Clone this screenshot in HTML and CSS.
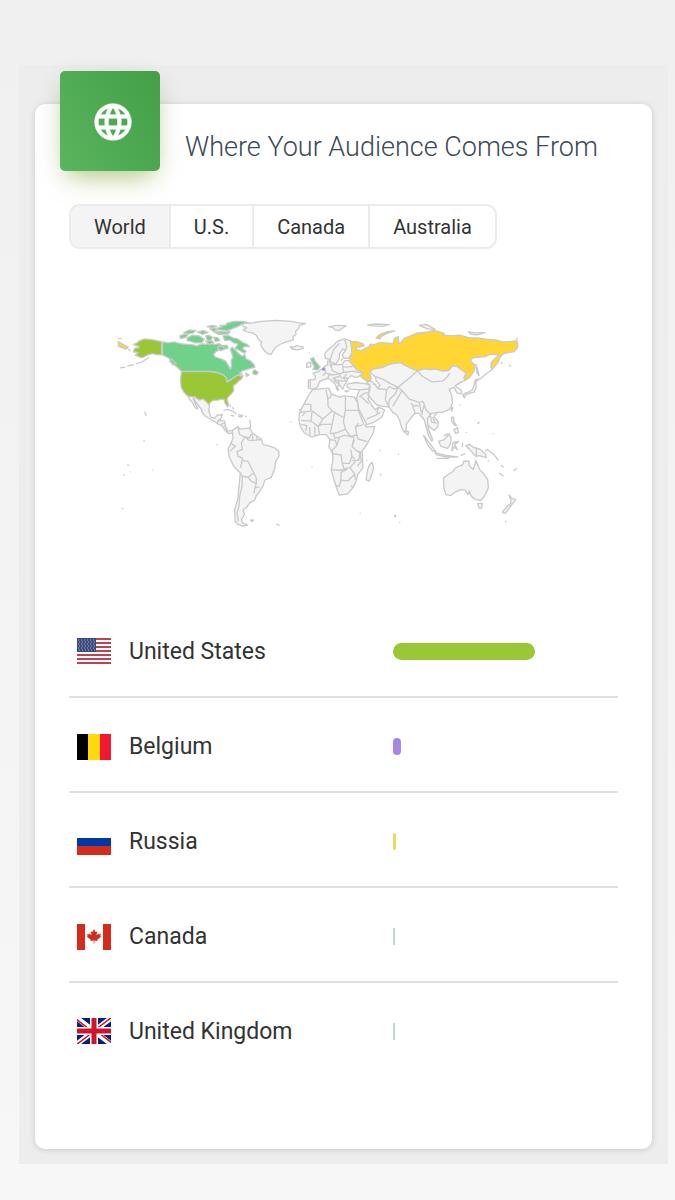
FILE: index.html
```html
<!DOCTYPE html>
<html lang="en">
<head>
<meta charset="utf-8">
<meta name="viewport" content="width=device-width, initial-scale=1">
<title>Audience</title>
<link rel="stylesheet" href="styles.css">
</head>
<body>
<main class="panel">
  <section class="card">
    <header class="card-header">
      <div class="card-icon">
        <svg class="globe" viewBox="0 0 24 24" aria-hidden="true"><path d="M11.99 2C6.47 2 2 6.48 2 12s4.47 10 9.99 10C17.52 22 22 17.52 22 12S17.52 2 11.99 2zm6.93 6h-2.95c-.32-1.25-.78-2.45-1.38-3.56 1.84.63 3.37 1.91 4.33 3.56zM12 4.04c.83 1.2 1.48 2.53 1.91 3.96h-3.82c.43-1.43 1.08-2.76 1.91-3.96zM4.26 14C4.1 13.36 4 12.69 4 12s.1-1.36.26-2h3.38c-.08.66-.14 1.32-.14 2 0 .68.06 1.34.14 2H4.26zm.82 2h2.95c.32 1.25.78 2.45 1.38 3.56-1.84-.63-3.37-1.9-4.33-3.56zm2.95-8H5.08c.96-1.66 2.49-2.93 4.33-3.56C8.81 5.55 8.35 6.75 8.03 8zM12 19.96c-.83-1.2-1.48-2.53-1.91-3.96h3.82c-.43 1.43-1.08 2.76-1.91 3.96zM14.34 14H9.66c-.09-.66-.16-1.32-.16-2 0-.68.07-1.35.16-2h4.68c.09.65.16 1.32.16 2 0 .68-.07 1.34-.16 2zm.25 5.56c.6-1.11 1.06-2.31 1.38-3.56h2.95c-.96 1.65-2.49 2.93-4.33 3.56zM16.36 14c.08-.66.14-1.32.14-2 0-.68-.06-1.34-.14-2h3.38c.16.64.26 1.31.26 2s-.1 1.36-.26 2h-3.38z"/></svg>
      </div>
      <h1 class="card-title">Where Your Audience Comes From</h1>
    </header>

    <nav class="tabs" aria-label="Region">
      <button type="button" class="tab is-active" aria-pressed="true">World</button>
      <button type="button" class="tab" aria-pressed="false">U.S.</button>
      <button type="button" class="tab" aria-pressed="false">Canada</button>
      <button type="button" class="tab" aria-pressed="false">Australia</button>
    </nav>

    <svg class="map" viewBox="0 0 1230 660" role="img" aria-label="World map of audience by country">
      <!-- North America -->
      <g class="canada">
        <path d="M158,96 175,99 192,96 215,102 245,104 262,108 275,102 290,103 300,98 315,104 328,101 338,108 352,106 355,115 335,118 318,125 311,135 318,142 334,147 347,153 354,163 362,178 366,168 364,152 370,142 366,130 362,118 368,112 378,122 390,134 398,139 405,134 410,148 421,152 433,164 436,172 420,176 408,180 398,183 390,190 398,192 388,196 370,205 352,217 350,205 340,195 322,188 215,185 207,176 197,168 186,160 178,145 168,140 158,135Z"/>
        <path d="M210,78 225,72 235,74 228,82 212,86Z M232,84 248,76 268,78 284,88 276,98 258,99 245,95 232,92Z M222,68 240,60 258,62 250,69 232,72Z M262,66 282,62 295,67 278,73Z M288,78 298,76 308,82 303,92 292,90Z M288,94 305,92 312,98 298,104Z M312,82 326,84 330,93 316,94Z"/>
        <path d="M350,40 372,34 400,34 418,39 396,43 386,49 370,55 355,62 330,60 318,56 338,50 330,47 350,45Z M300,56 315,54 325,60 310,64Z M312,66 335,65 362,66 355,72 325,73Z M292,50 308,46 322,49 306,53Z"/>
        <path d="M340,78 355,76 370,84 385,87 398,97 412,103 420,110 405,110 398,116 410,124 404,130 388,121 376,115 382,108 384,102 370,98 360,90 345,92Z M325,110 338,108 346,117 334,122 324,118Z M430,185 434,179 446,188 440,195 430,192Z M408,190 418,196 410,200Z"/>
      </g>
      <path class="usa" d="M155,95 130,90 105,87 90,92 82,98 70,104 86,109 88,113 74,115 70,126 85,128 76,136 90,142 98,143 112,136 128,131 140,134 155,135Z"/>
      <path class="usa" d="M215,185H300L322,188 340,195 350,205 352,217 370,205 385,195 392,199 400,197 396,207 388,213 379,222 371,228 372,243 365,252 354,263 352,270 357,286 353,291 346,280 344,270 335,268 325,271 310,272 301,278 299,287 290,277 280,268 268,271 255,262 235,260 222,247 214,232 212,208Z"/>
      <path class="line" d="M118,142 95,157 78,162M72,164 52,169M46,172 30,174M174,143 188,150 200,163M178,152 190,166M104,306 110,318M62,122 54,118M35,86H25"/>
      <path class="land" d="M235,260 255,262 268,271 280,268 290,277 299,287 297,300 303,322 315,326 322,316 338,315 334,326 326,334 321,340 300,327 285,318 278,309 274,297 264,285 254,270 250,266 258,285 264,298 256,294 248,278 240,270Z M321,340 326,331 345,334 347,353 354,364 372,361 370,369 358,372 346,362 338,349Z"/>
      <path class="line" d="M330,327 332,336M334,343 346,340M345,349 353,358M341,302 355,299 370,305 380,313M386,314 400,318 392,322 385,318M363,316 374,319M360,285 363,291M368,292 372,299M406,320H412M420,330 423,345 421,355"/>
      <!-- Greenland, Iceland, Svalbard and the Arctic islands -->
      <path class="land" d="M400,40 430,39 455,34 500,31 545,34 565,38 588,41 570,46 566,58 558,64 560,73 550,80 552,90 530,96 512,103 498,112 490,124 484,134 472,130 464,122 453,105 456,96 448,90 440,76 428,69 412,66 400,60 412,54 400,49Z M542,110 552,112 560,107 578,110 582,114 567,120 548,118Z"/>
      <path class="land" d="M658,50 680,46 710,47 700,54 688,62 676,60 672,54Z M775,45 800,42 840,44 820,49 790,48Z M930,46 950,43 965,51 978,58 955,57Z M1078,66 1100,69 1128,68 1105,75 1085,73Z"/>
      <!-- Russia -->
      <path class="russia" d="M722,95 740,95 760,101 765,107 750,112 740,110 742,119 758,122 766,115 778,112 782,103 795,104 810,98 830,99 852,101 855,86 866,80 870,104 884,86 900,79 922,70 950,67 975,61 1006,70 1000,76 1030,77 1055,76 1080,84 1105,84 1130,88 1165,91 1180,96 1225,93 1226,112 1216,125 1185,130 1175,140 1166,159 1150,178 1145,172 1147,157 1160,144 1170,134 1145,133 1128,140 1105,142 1090,145 1084,153 1098,166 1095,184 1080,204 1067,212 1064,204 1071,190 1055,178 1040,168 1028,170 1018,182 1000,184 980,178 960,179 942,177 925,183 900,173 882,164 872,158 852,161 838,164 820,173 800,176 785,181 780,192 786,205 782,214 765,209 754,200 760,188 742,180 730,166 719,152 728,132 722,112Z M800,84 812,73 835,65 856,63 832,71 815,80 812,87Z M25,95 55,112 48,118 25,109Z"/>
      <path class="line" d="M1100,163 1106,180 1110,198 1104,190 1100,163M1150,178 1130,193 1112,208M1180,157 1176,162M1200,166 1206,169M1220,88 1226,85"/>
      <!-- Europe -->
      <path class="land" d="M645,132 655,120 670,108 684,94 705,87 722,93 726,108 727,130 718,145 704,145 698,135 708,122 700,117 690,132 690,145 680,162 666,158 660,148 648,146Z"/>
      <path class="land" d="M638,178 648,167 655,165 654,154 660,154 664,164 682,164 698,164 706,152 719,152 730,166 742,180 760,188 754,196 744,202 736,202 726,197 716,206 710,218 705,226 700,238 692,228 686,215 672,204 678,216 690,224 682,234 676,222 664,210 655,206 640,210 630,216 624,232 610,238 596,234 597,210 616,209 618,199 610,190 625,186Z"/>
      <path class="uk" d="M603,146 613,143 616,152 624,162 632,171 625,180 610,179 615,171 610,162Z"/>
      <path class="land" d="M592,160 604,157 604,170 591,173Z M715,222 740,218 770,222 782,226 777,238 750,240 722,238 712,230Z M680,236 688,238 684,242Z M706,243H718L710,246Z"/>
      <path class="line" d="M704,208 712,203M645,170 648,190 640,198M650,190 670,195 690,192M665,165 668,182 690,192 702,188 700,166M702,172 730,170M702,188 730,184 758,190M690,192 695,204 716,206M672,204 690,200M655,206 658,196 672,194M685,212 700,214 712,212M602,210 602,232M700,145 695,153M662,150 672,120 690,100M706,90 712,110 708,122M702,204 712,192M662,164 663,170"/>
      <!-- Africa -->
      <path class="land" d="M608,240 625,238 658,235 665,252 690,262 705,258 735,262 745,280 748,305 762,340 772,352 795,350 792,370 775,400 758,425 760,450 760,475 745,495 740,515 730,535 715,553 690,557 685,545 675,515 665,480 670,455 670,432 658,410 662,390 650,375 630,375 605,382 585,370 572,350 568,330 570,308 585,280 595,260Z M788,458 793,475 780,515 770,510 775,480 780,467Z"/>
      <path class="line" d="M582,284 604,284 604,300 640,328 668,304 656,290 655,268 650,240M655,268 662,262 666,255M668,304 704,324 708,302V262M708,302H748M574,332 604,334 608,302M570,308 604,304M604,334 626,350 640,328M626,350 636,344 668,344 672,325 676,305M600,352 602,378M616,350V378M626,350 630,375M574,344 592,348 588,364M668,344 662,372 680,370 708,358 702,336 704,324M672,370 676,386 690,382 705,376 734,384M708,358 722,380 742,376 738,352 748,340M738,352 760,345M742,376 746,388 774,396M734,384 728,410 740,422 758,430M728,410 735,390M662,390 678,392 682,408 668,422 670,432M682,408 690,384M670,432 695,436 698,460 720,462 728,440 724,420M740,422 752,430 748,452 728,452M698,460 704,478 722,474 738,455M665,480 690,482 712,480 695,488 694,512 715,514 736,494 722,474M694,512 690,530 678,528M736,494 738,510M724,528 732,534M578,318 586,310M725,440 736,446M752,430 756,455 744,470"/>
      <!-- Western Asia, Arabia -->
      <path class="land" d="M742,262 750,240 777,238 782,250 776,268 786,285 798,300 808,292 826,300 818,322 795,337 773,345 762,325 748,297Z"/>
      <path class="line" d="M750,262 765,250 782,248M756,262 778,282M772,328 796,318 812,308M808,292 802,310"/>
      <!-- Central, southern and eastern Asia -->
      <path class="land" d="M782,226 770,216 785,214 796,222 805,236 812,226 800,212 798,200 785,192 785,181 800,176 820,173 838,164 852,161 872,158 882,164 900,173 925,183 942,177 960,179 980,178 1000,184 1018,182 1028,170 1040,168 1055,178 1071,190 1064,204 1067,212 1050,220 1038,228 1048,236 1058,242 1056,252 1044,250 1035,233 1020,238 1028,258 1030,280 1022,298 1000,308 985,308 975,320 988,338 985,352 975,362 965,355 955,345 960,365 970,388 968,395 958,378 952,355 945,330 935,318 928,310 915,312 905,325 892,342 890,362 885,368 878,355 870,330 862,315 850,308 840,292 820,290 802,285 788,270 776,255 782,240Z"/>
      <path class="line" d="M805,236 832,240 840,230 855,238 866,232 900,205 925,183M798,200 820,208 845,222 866,232M832,240 828,270 840,292M866,232 858,252 840,270 838,285M866,232 878,242 868,260 850,290M878,242 900,268 930,278 942,275M930,278 934,300 940,315M942,275 950,300 962,312 985,308M905,280 912,288 928,288M925,183 940,200 968,216 1000,214 1015,200 1022,190M962,312 968,338 985,340M945,285 938,310M910,290 918,310M965,315 955,325 955,345M790,222 800,225M1056,214 1045,226M970,322 978,338"/>
      <!-- Japan, Taiwan, Philippines and Indonesia -->
      <path class="land" d="M1060,256 1068,250 1080,246 1090,240 1095,225 1098,210 1112,207 1100,216 1101,232 1096,246 1084,250 1070,255 1066,264Z M1027,292 1031,294 1027,305Z M1027,322 1034,322 1034,335 1042,348 1036,346 1028,334Z M1034,360 1045,354 1048,368 1040,372Z M943,377 960,399 980,425 970,424 955,405Z M978,429 1010,437 1046,442 1010,442 980,435Z M988,395 1005,390 1018,374 1026,382 1024,402 1015,416 995,410Z M1031,398 1048,396 1036,404 1045,420 1035,412 1028,424Z M1070,408 1082,404 1095,414 1112,418 1128,432 1132,444 1110,438 1100,440 1084,422Z M890,364 898,366 896,376 890,372Z M1013,382 1022,370"/>
      <path class="line" d="M1102,414V438M1055,438 1068,432M1060,400V412M1128,424 1138,418M1136,422 1154,434 1168,452M1176,466 1184,474M1170,490 1184,500M1214,484 1224,475M982,446H1020M1004,378 1018,372"/>
      <!-- Australia and New Zealand -->
      <path class="land" d="M1003,505 1018,494 1032,485 1038,476 1048,470 1060,466 1064,455 1080,455 1080,468 1092,479 1098,464 1100,452 1106,466 1112,480 1122,490 1136,510 1138,535 1126,560 1115,573 1100,570 1088,562 1080,545 1077,555 1068,542 1055,540 1038,548 1025,558 1010,555 1004,535Z M1106,582H1120L1117,596H1110Z M1200,556 1208,566 1220,570 1210,584 1204,582 1206,572Z M1200,585 1207,588 1188,612 1180,608 1186,600Z"/>
      <!-- South America -->
      <path class="land" d="M368,362 385,350 390,358 400,357 420,355 428,370 440,378 455,388 460,405 475,408 495,415 508,425 508,440 498,455 495,480 485,503 465,512 460,530 447,550 440,558 435,572 420,580 412,592 400,602 405,615 395,630 400,642 414,646 400,650 385,645 376,635 375,600 384,570 388,530 392,490 372,470 358,440 355,418 362,405 370,385Z M422,632 432,631 428,636Z"/>
      <path class="line" d="M385,355 390,375 405,382 395,400 398,420 382,425 385,440 398,445 398,452 415,455 425,475 432,490 440,505 440,522 425,515 415,503 398,500 392,490M405,382 420,385 425,372M428,374 430,392 455,390M441,380 443,394M398,452 392,475M398,500 397,530 390,560 388,590 382,610 386,636M415,503 432,490M450,532 436,535 433,552M362,400 378,410 360,425M405,382 418,392 430,392M440,522 436,535M500,644 510,648"/>
      <!-- Ocean islands -->
      <path class="speck" d="M100,394h5M52,465l5,3M40,496h5M60,487h3M127,481h3M36,597h4M320,405h4M542,337h4M606,473h3M810,423h4M866,434h3M812,498l4,-6M854,620l6,3M870,639h3M751,611h3M1106,343l4,-6M1070,368h4M1150,372h3M1108,338h4M1050,286h4M568,300h8M771,452h3M856,618h5M1188,636h4M1136,454h4M598,128h3M622,138h3"/>
      <circle class="belgium" cx="642" cy="178" r="4"/>
    </svg>

    <table class="countries" aria-label="Audience by country">
      <tbody>
        <tr>
          <td class="flag-cell"><svg class="flag" viewBox="0 0 34 26" role="img" aria-label="Flag of the United States"><path fill="#fff" d="M0 0h34v26H0z"/><path stroke="#b22234" stroke-opacity=".85" stroke-width="2" d="M0 1h34M0 5h34M0 9h34M0 13h34M0 17h34M0 21h34M0 25h34"/><path fill="#3c4b7e" d="M0 0h19v14H0z"/><path stroke="#9fa8cc" stroke-width="1" stroke-dasharray="1 2" d="M1 2h18M2 4h17M1 6h18M2 8h17M1 10h18M2 12h17"/></svg></td>
          <th class="name" scope="row">United States</th>
          <td><div class="bar bar-usa" style="width:65.5%"></div></td>
        </tr>
        <tr>
          <td class="flag-cell"><svg class="flag" viewBox="0 0 34 26" role="img" aria-label="Flag of Belgium"><path d="M0 0h12v26H0z"/><path fill="#ffd90c" d="M11 0h12v26H11z"/><path fill="#f31830" d="M23 0h11v26H23z"/></svg></td>
          <th class="name" scope="row">Belgium</th>
          <td><div class="bar bar-belgium" style="width:3.6%"></div></td>
        </tr>
        <tr>
          <td class="flag-cell"><svg class="flag" viewBox="0 0 34 26" role="img" aria-label="Flag of Russia"><path fill="#fff" d="M0 0h34v9H0z"/><path fill="#0039a6" d="M0 9h34v9H0z"/><path fill="#d52b1e" d="M0 17h34v9H0z"/></svg></td>
          <th class="name" scope="row">Russia</th>
          <td><div class="bar bar-russia" style="width:1.5%"></div></td>
        </tr>
        <tr>
          <td class="flag-cell"><svg class="flag" viewBox="0 0 34 26" role="img" aria-label="Flag of Canada"><path fill="#fff" d="M0 0h34v26H0z"/><path fill="#d52b1e" d="M0 0h8v26H0zM26 0h8v26h-8zM17 5l1.5 3 1.7-.8-.7 4 2-1.8.4 1 2.100-.3-.7 2 .8.7-3.900 2.900.4 1.300-3.300-.5.1 3h-.8l.1-3-3.300.5.4-1.300-3.900-2.900.8-.7-.7-2 2.100.3.4-1 2 1.800-.7-4 1.700.8z"/></svg></td>
          <th class="name" scope="row">Canada</th>
          <td><div class="bar bar-small" style="width:1%"></div></td>
        </tr>
        <tr>
          <td class="flag-cell"><svg class="flag" viewBox="0 0 34 26" role="img" aria-label="Flag of the United Kingdom"><path fill="#00247d" d="M0 0h34v26H0z"/><path stroke="#fff" stroke-width="5" d="M0 0l34 26M34 0L0 26"/><path stroke="#cf142b" stroke-width="1.500" d="M-1 1l17 13M35-1L18 12M18 12l17 13M16 14L-1 27"/><path stroke="#fff" stroke-width="8" d="M17 0v26M0 13h34"/><path stroke="#cf142b" stroke-width="5" d="M17 0v26M0 13h34"/></svg></td>
          <th class="name" scope="row">United Kingdom</th>
          <td><div class="bar bar-small" style="width:1%"></div></td>
        </tr>
      </tbody>
    </table>
  </section>
</main>
</body>
</html>
```

FILE: styles.css
```css
* {
  box-sizing: border-box;
}

body {
  margin: 0;
  min-height: 100vh;
  display: flow-root;
  background: linear-gradient(#f0f0f0, #f7f7f7);
  color: #333;
  font-family: Roboto, "Liberation Sans", sans-serif;
}

.panel {
  margin: 65px 7px 35px 19px;
  padding: 39px 16px 15px;
  background: #ededed;
}

.card {
  padding: 0 34px 72px;
  background: #fff;
  border-radius: 10px;
  box-shadow: 0 1px 6px rgba(0, 0, 0, 0.15);
}

.card-header {
  display: flex;
  align-items: flex-start;
  gap: 25px;
  margin-left: -9px;
}

.card-icon {
  flex: none;
  display: flex;
  align-items: center;
  justify-content: center;
  width: 100px;
  height: 100px;
  margin-top: -33px;
  padding: 2px 0 0 5px;
  background: linear-gradient(60deg, #5ab55e, #43a047);
  border-radius: 5px;
  box-shadow: 0 6px 28px -6px rgba(0, 0, 0, 0.16), 0 14px 22px -8px rgba(160, 200, 60, 0.5);
}

.globe {
  width: 44px;
  height: 44px;
  fill: #fff;
  stroke: #fff;
  stroke-width: 0.3;
}

.card-title {
  margin: 26px 0 0;
  font-size: 27px;
  font-weight: 300;
  line-height: 34px;
  color: #3c4858;
}

.tabs {
  display: inline-flex;
  margin-top: 33px;
  border: 2px solid #ebebeb;
  border-radius: 11px;
  overflow: hidden;
}

.tab {
  padding: 1px 23px 0;
  border: 0;
  background: #fff;
  color: #333;
  font: inherit;
  font-size: 20px;
  line-height: 40px;
}

.tab + .tab {
  border-left: 2px solid #ebebeb;
}

.tab.is-active {
  background: #f4f4f4;
}

.map {
  display: block;
  width: 74.5%;
  margin: 61px 0 73px 41px;
  stroke: #cacaca;
  stroke-width: 4;
  stroke-linejoin: round;
}

.land {
  fill: #f4f4f4;
}

.canada {
  fill: #6fd18a;
}

.usa {
  fill: #99c736;
}

.russia {
  fill: #ffd633;
}

.uk {
  fill: #7fce98;
}

.belgium {
  fill: #a586e5;
  stroke: #999;
  stroke-width: 1;
}

.line,
.speck {
  fill: none;
}

.countries {
  width: 100%;
  table-layout: fixed;
  border-collapse: collapse;
}

.countries td,
.countries th {
  height: 95px;
  padding: 4px 8px 0 0;
  border-bottom: 2px solid #e0e0e0;
  vertical-align: middle;
}

.countries tr:last-child td,
.countries tr:last-child th {
  padding-bottom: 2px;
  border-bottom: 0;
}

.countries .flag-cell {
  width: 60px;
  padding-left: 8px;
}

.countries .name {
  width: 264px;
  font-size: 23px;
  font-weight: 400;
  text-align: left;
}

.flag {
  display: block;
  width: 34px;
  height: 26px;
}

.bar {
  height: 17px;
  border-radius: 9px;
}

.bar-usa {
  background: #99c736;
}

.bar-belgium {
  background: #a586e5;
}

.bar-russia {
  background: #f3d65c;
}

.bar-small {
  border-radius: 0;
  background: #c5d9d2;
}
```
